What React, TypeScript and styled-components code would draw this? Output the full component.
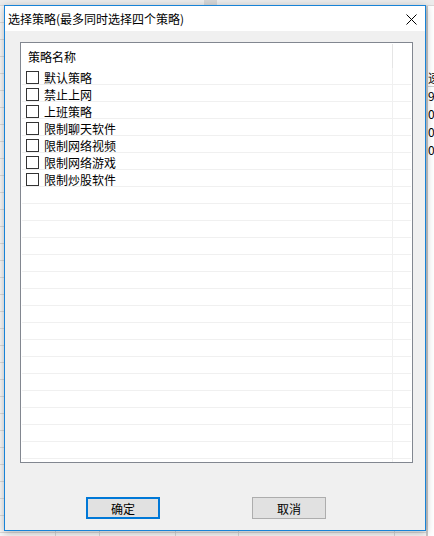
import React from 'react';
import styled, { createGlobalStyle } from 'styled-components';

const Global = createGlobalStyle`
  html, body { margin: 0; padding: 0; }
  body {
    width: 434px;
    height: 536px;
    overflow: hidden;
    font-family: "Noto Sans CJK SC", "Microsoft YaHei", "Liberation Sans", sans-serif;
    font-size: 12px;
    color: #000;
  }
`;

const Desktop = styled.div`
  position: relative;
  width: 434px;
  height: 536px;
  overflow: hidden;
  background: #fff;
  display: flex;
  flex-direction: column;
`;

const TopStrip = styled.div`
  flex: none;
  height: 5px;
  background: linear-gradient(to right, #ececec 0 204px, #d6d6d6 204px 217px, #ececec 217px);
  border-bottom: 1px solid #d8d8d8;
`;

const Workspace = styled.div`
  flex: 1;
  display: grid;
  grid-template-columns: 426px 1fr;
`;

const Sheet = styled.div`
  background-color: #f8f8f8;
  background-image:
    linear-gradient(to right, transparent 0 55px, #d9d9d9 55px 56px, transparent 56px 99px, #d9d9d9 99px 100px,
      transparent 100px 175px, #d9d9d9 175px 176px, transparent 176px 238px, #d9d9d9 238px 239px,
      transparent 239px 394px, #d9d9d9 394px 395px, transparent 395px),
    repeating-linear-gradient(to bottom, transparent 0 16px, #dcdcdc 16px 17px);
`;

const SidePanel = styled.div`
  background: #fff;
  border-left: 2px solid #c8c8c8;
  display: flex;
  flex-direction: column;
  padding-top: 63px;
  overflow: hidden;
`;

const SideRow = styled.div<{ $head?: boolean }>`
  height: 17px;
  line-height: 17px;
  white-space: nowrap;
  font-size: 12px;
  color: #000;
  border-bottom: 1px solid ${p => (p.$head ? '#d0d0d0' : 'transparent')};
`;

const Dialog = styled.div`
  position: absolute;
  left: 4px;
  top: 5px;
  width: 422px;
  height: 526px;
  box-sizing: border-box;
  border: 1px solid #1883d7;
  background: #f0f0f0;
  display: flex;
  flex-direction: column;
  box-shadow: 0 2px 8px rgba(0, 0, 0, 0.28);
`;

const TitleBar = styled.div`
  flex: none;
  height: 25px;
  background: #fff;
  display: flex;
  align-items: center;
  justify-content: space-between;
  padding: 0 8px 0 3px;
`;

const Title = styled.span`
  font-size: 12px;
  line-height: 14px;
  color: #000;
  white-space: nowrap;
`;

const CloseIcon = styled.svg`
  display: block;
  width: 11px;
  height: 11px;
  margin-top: 1px;
`;

const Body = styled.div`
  flex: 1;
  display: flex;
  flex-direction: column;
  padding: 11px 0 0 15px;
`;

const ListBox = styled.div`
  width: 393px;
  height: 421px;
  box-sizing: border-box;
  border: 1px solid #828790;
  background: #fff;
  overflow: hidden;
  display: flex;
  flex-direction: column;
`;

const HeaderRow = styled.div`
  flex: none;
  height: 25px;
  display: grid;
  grid-template-columns: 371px 1fr;
  margin: 0 1px;
`;

const HeaderCell = styled.div`
  display: flex;
  align-items: center;
  padding: 1px 0 0 6px;
  font-size: 12px;
  border-right: 1px solid #e5e5e5;
  margin: 1px 0 0;
`;

const Row = styled.div`
  flex: none;
  height: 17px;
  box-sizing: border-box;
  margin: 0 1px;
  display: grid;
  grid-template-columns: 371px 1fr;
  border-bottom: 1px solid #f0f0f0;
`;

const Cell = styled.div`
  display: flex;
  align-items: center;
  gap: 5px;
  padding: 3px 0 0 4px;
  border-right: 1px solid #f0f0f0;
  font-size: 12px;
  line-height: 13px;
  white-space: nowrap;
`;

const CheckBox = styled.span`
  flex: none;
  width: 13px;
  height: 13px;
  box-sizing: border-box;
  border: 1px solid #333;
  background: #fff;
`;

const ButtonRow = styled.div`
  display: flex;
  gap: 92px;
  margin: 34px 0 0 66px;
`;

const Button = styled.button<{ $primary?: boolean }>`
  width: 74px;
  height: 22px;
  box-sizing: border-box;
  padding: 0;
  background: #e1e1e1;
  border: ${p => (p.$primary ? '2px solid #0078d7' : '1px solid #adadad')};
  font-family: inherit;
  font-size: 12px;
  color: #000;
  display: flex;
  align-items: center;
  justify-content: center;
`;

const policies = ['默认策略', '禁止上网', '上班策略', '限制聊天软件', '限制网络视频', '限制网络游戏', '限制炒股软件'];
const rows = Array.from({ length: 24 }, (_, i) => policies[i] ?? null);

export default function App() {
  return (
    <>
      <Global />
      <Desktop>
        <TopStrip />
        <Workspace>
          <Sheet />
          <SidePanel>
            <SideRow $head>速度</SideRow>
            <SideRow>9.00</SideRow>
            <SideRow>0.00</SideRow>
            <SideRow>0.00</SideRow>
            <SideRow>0.00</SideRow>
          </SidePanel>
        </Workspace>
        <Dialog>
          <TitleBar>
            <Title>选择策略(最多同时选择四个策略)</Title>
            <CloseIcon viewBox="0 0 11 11">
              <path d="M0.5 0.5 L10.5 10.5 M10.5 0.5 L0.5 10.5" stroke="#000" strokeWidth="1" fill="none" />
            </CloseIcon>
          </TitleBar>
          <Body>
            <ListBox>
              <HeaderRow>
                <HeaderCell>策略名称</HeaderCell>
                <div />
              </HeaderRow>
              {rows.map((name, i) => (
                <Row key={i}>
                  <Cell>
                    {name && (
                      <>
                        <CheckBox />
                        <span>{name}</span>
                      </>
                    )}
                  </Cell>
                  <div />
                </Row>
              ))}
            </ListBox>
            <ButtonRow>
              <Button $primary>确定</Button>
              <Button>取消</Button>
            </ButtonRow>
          </Body>
        </Dialog>
      </Desktop>
    </>
  );
}
